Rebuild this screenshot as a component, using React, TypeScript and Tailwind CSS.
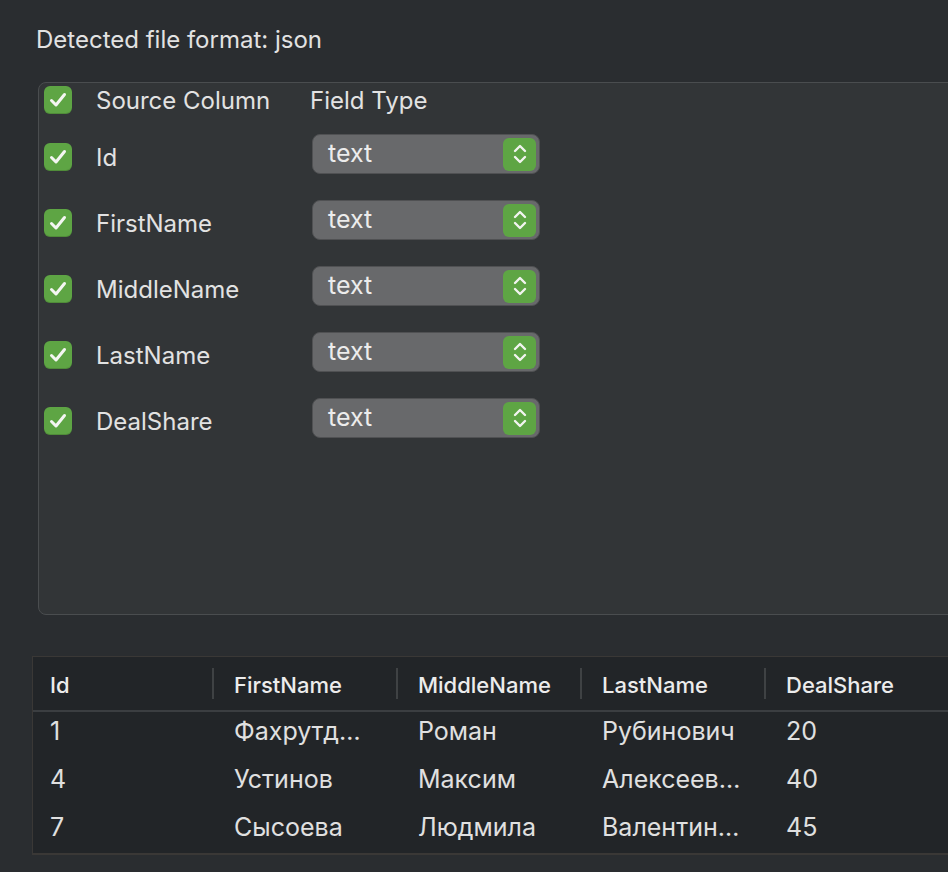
import { useState } from "react";

const fields = ["Id", "FirstName", "MiddleName", "LastName", "DealShare"];

const rows = [
  ["1", "Фахрутдинов", "Роман", "Рубинович", "20"],
  ["4", "Устинов", "Максим", "Алексеевич", "40"],
  ["7", "Сысоева", "Людмила", "Валентиновна", "45"],
];

const CheckBox = ({ checked }: { checked: boolean }) => (
  <div className="w-[28px] h-[28px] shrink-0 rounded-[6px] bg-[#5ea544] shadow-[inset_0_-1px_0_rgba(0,0,0,0.15)] flex items-center justify-center">
    {checked && (
      <svg width="20" height="20" viewBox="0 0 20 20">
        <path
          d="M3.5 10.5 L8 15 L16.5 4.5"
          fill="none"
          stroke="#f4f6f2"
          strokeWidth="3"
          strokeLinecap="round"
          strokeLinejoin="round"
        />
      </svg>
    )}
  </div>
);

const Select = ({ value }: { value: string }) => (
  <div className="w-[228px] h-[40px] mb-[6px] rounded-[8px] bg-[#68696b] border border-[#505153] flex items-center justify-between pl-[15px] pr-[3px]">
    <span className="text-[25px] leading-[30px] text-[#ececec] -mt-[3px]">{value}</span>
    <div className="w-[33px] h-[33px] rounded-[6px] bg-[#5ea544] flex items-center justify-center">
      <svg width="20" height="26" viewBox="0 0 20 26">
        <path
          d="M5 10 L10 5 L15 10"
          fill="none"
          stroke="#f2f4ef"
          strokeWidth="2.4"
          strokeLinecap="round"
          strokeLinejoin="round"
        />
        <path
          d="M5 16 L10 21 L15 16"
          fill="none"
          stroke="#f2f4ef"
          strokeWidth="2.4"
          strokeLinecap="round"
          strokeLinejoin="round"
        />
      </svg>
    </div>
  </div>
);

export default function App() {
  const [checked] = useState(fields.map(() => true));

  return (
    <div
      className="w-[948px] h-[872px] overflow-hidden bg-[#2a2d30] text-[#e2e2e2]"
      style={{ fontFamily: "Inter, 'Noto Sans', sans-serif" }}
    >
      <div className="pl-[36px] pt-[25px] h-[82px] text-[24px] leading-[30px]">
        Detected file format: json
      </div>

      {/* mapping panel */}
      <div className="ml-[38px] w-[940px] h-[533px] rounded-[8px] border border-[#4a4d4f] bg-[#323537] pt-[3px] pl-[5px] text-[24px] leading-[30px]">
        <div className="flex items-center h-[28px] mb-[10px]">
          <CheckBox checked />
          <span className="ml-[24px] w-[214px] mt-[2px]">Source Column</span>
          <span className="mt-[2px]">Field Type</span>
        </div>
        {fields.map((f, i) => (
          <div key={f} className="flex items-center h-[66px]">
            <CheckBox checked={checked[i]} />
            <span className="ml-[24px] w-[216px] mt-[2px]">{f}</span>
            <Select value="text" />
          </div>
        ))}
      </div>

      {/* preview table */}
      <div className="mt-[41px] ml-[32px] w-[940px] h-[199px] overflow-hidden bg-[#222528] border-l border-t border-b-2 border-[#3a3836] text-[#e0e0e0]">
        <div className="flex h-[55px] border-b-2 border-[#3b3e41] text-[22px] font-medium text-[#ececec]">
          {fields.map((f) => (
            <div key={f} className="w-[184px] shrink-0 flex items-center pl-[17px]">
              <span className="flex-1 mt-[4px]">{f}</span>
              <div className="w-[2px] h-[31px] mr-[3px] bg-[#3f4244]" />
            </div>
          ))}
        </div>
        {rows.map((r) => (
          <div key={r[0]} className="flex h-[48px] items-center pb-[8px] text-[25px]">
            {r.map((c, j) => (
              <div key={j} className="w-[184px] shrink-0 pl-[17px]">
                <div className="w-[140px] truncate">{c}</div>
              </div>
            ))}
          </div>
        ))}
      </div>
    </div>
  );
}
